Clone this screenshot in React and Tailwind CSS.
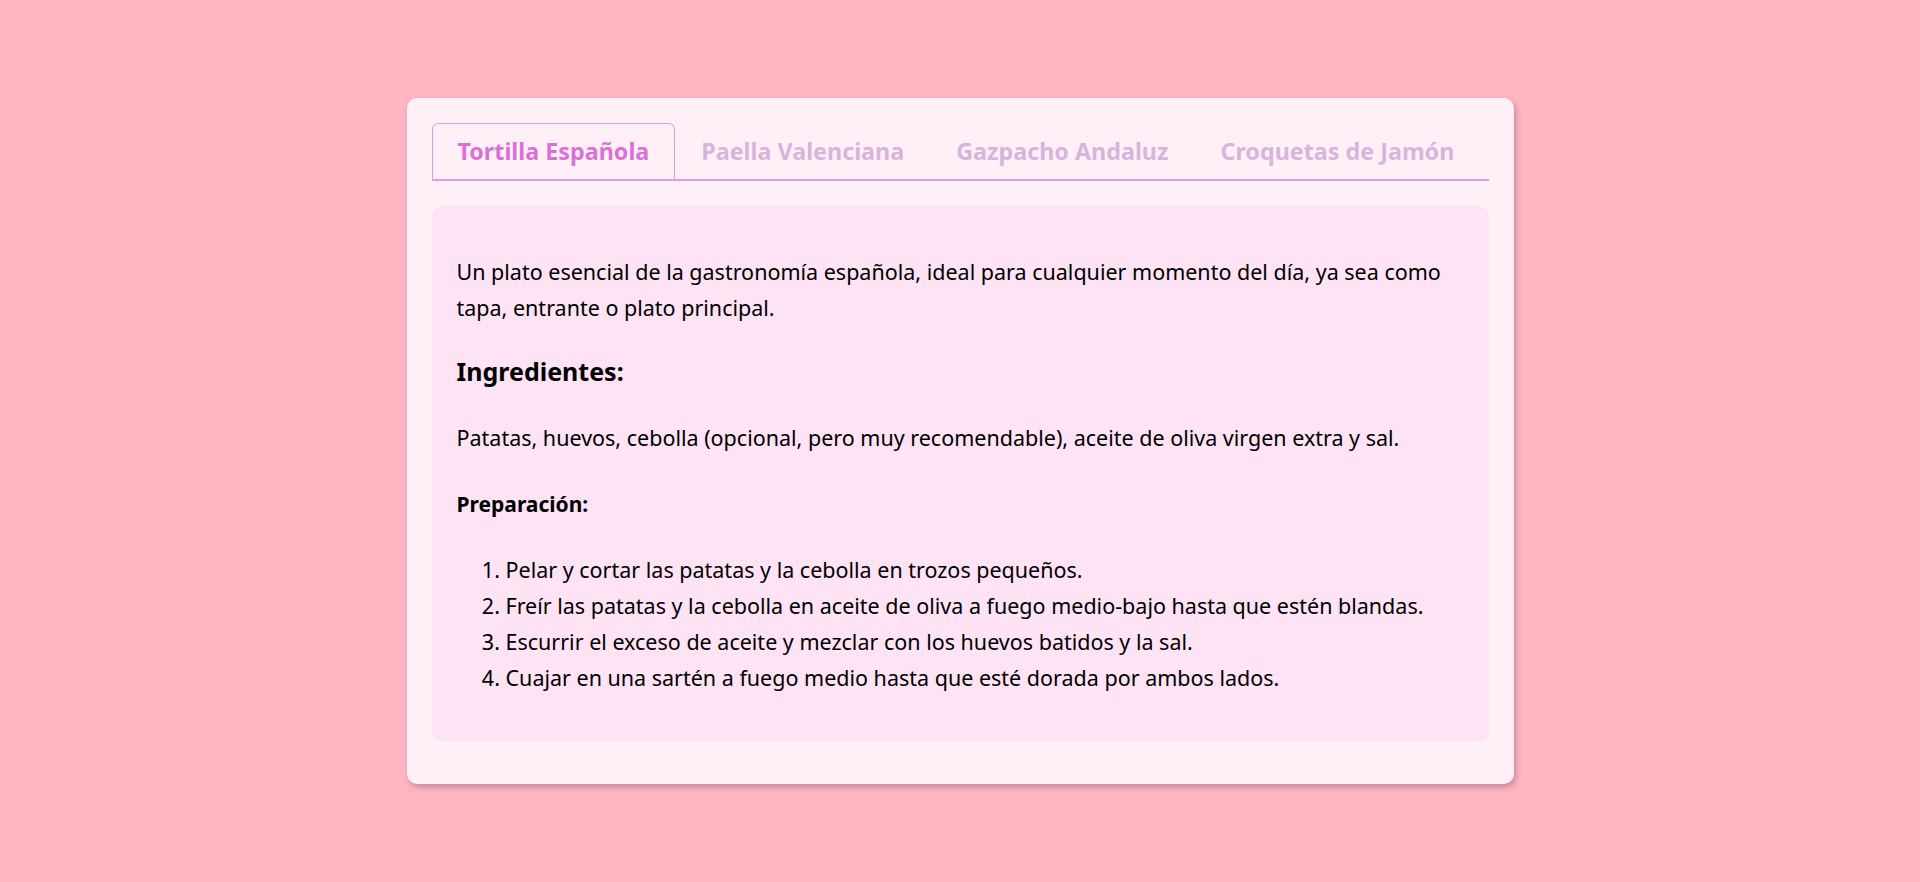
import { useState } from 'react';

const tabs = ['Tortilla Española', 'Paella Valenciana', 'Gazpacho Andaluz', 'Croquetas de Jamón'];

function App() {
  const [activa, setActiva] = useState(0);

  return (
    <div className="min-h-screen bg-[#ffb6c1] flex items-center justify-center font-['Noto_Sans',sans-serif]">
      <div className="w-[1107px] bg-[#fff0f8] rounded-[10px] px-[25px] pt-[25px] pb-[43px] shadow-[2px_3px_6px_rgba(120,80,120,0.45)]">
        <div className="flex border-b-2 border-[#dda0dd]">
          {tabs.map((t, i) => (
            <button
              key={t}
              onClick={() => setActiva(i)}
              className={
                i === activa
                  ? 'px-[25px] py-3 text-[23.3px] leading-[31px] font-bold text-[#da70d6] border border-b-0 border-[#dda0dd] rounded-t-[6px]'
                  : 'px-[25px] py-3 text-[23.3px] leading-[31px] font-bold text-[#d8b4dc] border border-b-0 border-transparent'
              }
            >
              {t}
            </button>
          ))}
        </div>

        <div className="mt-[25px] bg-[#fde3f4] rounded-[10px] p-[25px] text-[21.5px] leading-[36px] text-black">
          <p className="mt-[23px]">
            Un plato esencial de la gastronomía española, ideal para cualquier momento del día, ya sea como tapa,
            entrante o plato principal.
          </p>
          <h3 className="mt-[29px] mb-[33px] text-[25px] leading-[32px] font-bold">Ingredientes:</h3>
          <p>Patatas, huevos, cebolla (opcional, pero muy recomendable), aceite de oliva virgen extra y sal.</p>
          <p className="my-[30px] text-[21px] font-bold">Preparación:</p>
          <ol className="list-decimal pl-[49px] mb-5">
            <li>Pelar y cortar las patatas y la cebolla en trozos pequeños.</li>
            <li>Freír las patatas y la cebolla en aceite de oliva a fuego medio-bajo hasta que estén blandas.</li>
            <li>Escurrir el exceso de aceite y mezclar con los huevos batidos y la sal.</li>
            <li>Cuajar en una sartén a fuego medio hasta que esté dorada por ambos lados.</li>
          </ol>
        </div>
      </div>
    </div>
  );
}

export default App;
